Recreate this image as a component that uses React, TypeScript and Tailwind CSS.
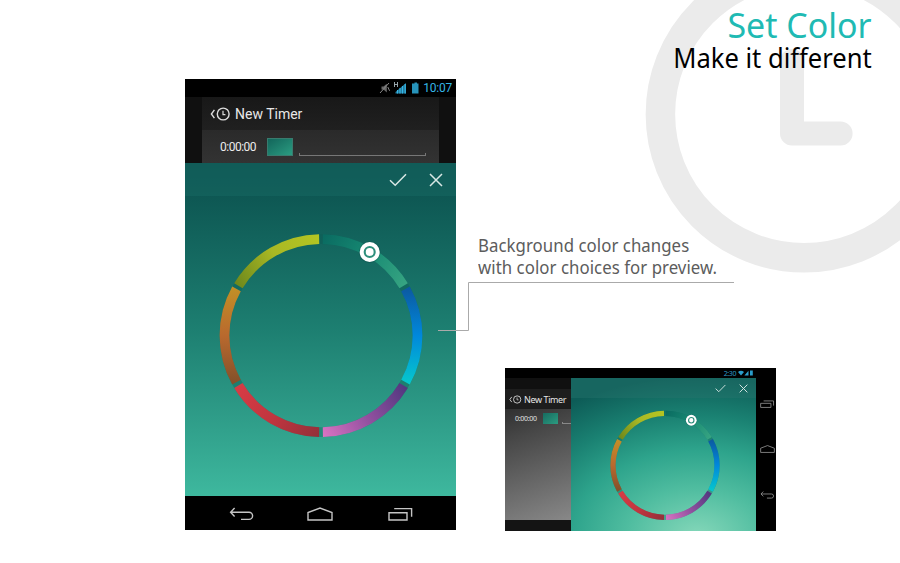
import React from "react";

type Stops = [string, string, string];

const SEGMENTS: Stops[] = [
  ["#0a6b61", "#178a73", "#37a482"],
  ["#0c59a0", "#0088dc", "#06c8cc"],
  ["#51377f", "#91509f", "#d873c2"],
  ["#93303a", "#c0353f", "#d63c45"],
  ["#82502a", "#b9692e", "#c29026"],
  ["#6d881c", "#a9b824", "#b4c522"],
];

const point = (deg: number, r = 96.5): [number, number] => {
  const a = (deg * Math.PI) / 180;
  return [102 + r * Math.sin(a), 102 - r * Math.cos(a)];
};

function ColorWheel({ id, size }: { id: string; size: number }) {
  return (
    <svg width={size} height={size} viewBox="0 -0.6 204 204" className="block shrink-0">
      <defs>
        {SEGMENTS.map((stops, i) => {
          const [x1, y1] = point(i * 60);
          const [x2, y2] = point(i * 60 + 60);
          return (
            <linearGradient key={i} id={`${id}${i}`} gradientUnits="userSpaceOnUse" x1={x1} y1={y1} x2={x2} y2={y2}>
              <stop offset="0" stopColor={stops[0]} />
              <stop offset="0.5" stopColor={stops[1]} />
              <stop offset="1" stopColor={stops[2]} />
            </linearGradient>
          );
        })}
      </defs>
      <circle cx="102" cy="102" r="96.5" fill="none" stroke="#0a5c54" strokeOpacity="0.35" strokeWidth="9.6" />
      {SEGMENTS.map((_, i) => {
        const [x1, y1] = point(i * 60 + 1.1);
        const [x2, y2] = point(i * 60 + 58.9);
        return (
          <path
            key={i}
            d={`M${x1} ${y1}A96.5 96.5 0 0 1 ${x2} ${y2}`}
            fill="none"
            stroke={`url(#${id}${i})`}
            strokeWidth="9.8"
          />
        );
      })}
      <circle cx="150.7" cy="18.6" r="10.8" fill="#0a4a45" fillOpacity="0.3" />
      <circle cx="150.7" cy="18.4" r="10" fill="#fff" />
      <circle cx="150.7" cy="18.4" r="5" fill="none" stroke="#2d8f7c" strokeWidth="2.1" />
    </svg>
  );
}

function BackClock({ className }: { className: string }) {
  return (
    <svg viewBox="0 0 21 14" className={className} fill="none" stroke="#dcdcdc">
      <path d="M4.4 2.8L1.4 7l3 4.2" strokeWidth="1.4" />
      <circle cx="13.2" cy="7" r="5.9" strokeWidth="1.4" />
      <path d="M13 3.8V7.6H15.4" strokeWidth="1.2" />
    </svg>
  );
}

function Check({ className }: { className: string }) {
  return (
    <svg viewBox="0 0 18 14" className={className} fill="none" stroke="#d9e8e5" strokeWidth="1.5">
      <path d="M1 7.2L6.2 12.2 17 1.2" />
    </svg>
  );
}

function Cross({ className }: { className: string }) {
  return (
    <svg viewBox="0 0 14 14" className={className} fill="none" stroke="#d9e8e5" strokeWidth="1.5">
      <path d="M1 1L13 13M13 1L1 13" />
    </svg>
  );
}

const BACK = "M5.6 1L1.6 5.2 5.6 9.4M1.6 5.2H20A3.5 3.5 0 0 1 20 12.4H12";
const HOME = "M1 13V5.6L13 1 25 5.6V13Z";
const RECENT = "M1 5.8H19V13H1ZM6.2 1.6H23.6V9.8";

function NavIcon({ d, className, color }: { d: string; className: string; color: string }) {
  return (
    <svg viewBox="0 0 26 14" className={className} fill="none" stroke={color} strokeWidth="1.4">
      <path d={d} />
    </svg>
  );
}

function Phone() {
  return (
    <div className="flex h-[451px] w-[271px] flex-col bg-black">
      <div className="flex h-[18px] items-center justify-end pr-[4px]">
        <svg width="40" height="14" viewBox="0 0 40 14" className="mr-[4px]" fill="none">
          <path d="M2.5 5.5H4.5L7.8 2.7V11.4L4.5 8.5H2.5Z" fill="#686868" />
          <path d="M1 12L10 2M8.8 6L10.6 9.8" stroke="#888" strokeWidth="1" />
          <path d="M15.5 1V6M18.5 1V6M15.5 3.5H18.5" stroke="#a5b4bb" strokeWidth="0.9" />
          <path d="M16.5 12.5V11L27 2V12.5Z" fill="#247b9c" />
          <path d="M18.5 9V12.5M21 7V12.5M23.5 5V12.5M26.2 3V12.5" stroke="#35b5e5" strokeWidth="1.1" />
          <path d="M34 2.5H35.5V1.4H38V2.5H39.5V12.6H33V2.5Z" fill="#2793ba" />
        </svg>
        <span className="text-[12px] leading-none tracking-[-0.25px] text-[#35b5e5]">10:07</span>
      </div>
      <div className="h-[66px] bg-[#101010] px-[17px]">
        <div className="flex h-[33px] items-center bg-gradient-to-b from-[#181818] to-[#202020] pl-[8px]">
          <BackClock className="h-[14px] w-[21px]" />
          <span className="ml-[4px] text-[14px] leading-none text-[#e8e8e8]">New Timer</span>
        </div>
        <div className="flex h-[33px] items-center bg-gradient-to-b from-[#2a2a2a] to-[#333] pl-[18px]">
          <span className="mt-px w-[47px] text-[12px] leading-none tracking-[-0.5px] text-[#ececec]">0:00:00</span>
          <span className="mt-px h-[18px] w-[26px] border border-[#397b6e] bg-gradient-to-br from-[#12665b] to-[#2b9c81]" />
          <span className="ml-[6px] mt-[15px] h-[3px] w-[127px] border-x border-b border-[#777]" />
        </div>
      </div>
      <div className="flex h-[333px] flex-col bg-gradient-to-b from-[#0a4e4c] via-[#1d7f71] to-[#3eb89e]">
        <div className="flex h-[33px] items-center justify-end bg-[#156660]/60 pr-[13px]">
          <Check className="h-[14px] w-[18px]" />
          <Cross className="ml-[22px] h-[14px] w-[14px]" />
        </div>
        <div className="ml-[34px] mt-[37px]">
          <ColorWheel id="p" size={204} />
        </div>
      </div>
      <div className="flex h-[34px] items-center pl-[44px] pt-[2px]">
        <NavIcon d={BACK} className="h-[14px] w-[26px]" color="#c5c5c5" />
        <NavIcon d={HOME} className="ml-[52px] h-[14px] w-[26px]" color="#c5c5c5" />
        <NavIcon d={RECENT} className="ml-[55px] h-[14px] w-[26px]" color="#c5c5c5" />
      </div>
    </div>
  );
}

function Tablet() {
  return (
    <div className="flex h-[163px] w-[271px] bg-black">
      <div className="flex w-[251px] flex-col">
        <div className="flex h-[10px] items-center justify-end gap-[2px] pr-[3px]">
          <span className="text-[7px] leading-none tracking-[-0.4px] text-[#2e9cc6]">2:30</span>
          <svg width="15" height="6" viewBox="0 0 15 6" fill="#2a9dca">
            <path d="M0 2Q3 -0.6 6 2L3 5.6ZM6.4 5.5L10.5 0.8V5.5ZM12 0.6H14.8V5.5H12Z" />
          </svg>
        </div>
        <div className="flex h-[153px]">
          <div className="w-[66px] bg-[#141414]">
            <div className="h-[11px] bg-[#101010]" />
            <div className="flex h-[20px] items-center bg-[#1d1d1d] pl-[4px]">
              <BackClock className="h-[9px] w-[13px]" />
              <span className="ml-[2px] whitespace-nowrap text-[9px] leading-none tracking-[-0.4px] text-[#e6e6e6]">New Timer</span>
            </div>
            <div className="h-[111px] bg-[linear-gradient(160deg,#303030_0%,#484848_25%,#646464_58%,#888_100%)]">
              <div className="flex h-[19px] items-center pl-[10px]">
                <span className="w-[28px] text-[7px] leading-none tracking-[-0.3px] text-[#e2e2e2]">0:00:00</span>
                <span className="h-[11px] w-[15px] bg-gradient-to-br from-[#176c60] to-[#2c9b80]" />
                <span className="ml-[4px] mt-[9px] h-[2px] w-[9px] border-b border-l border-[#888]" />
              </div>
            </div>
          </div>
          <div className="flex w-[185px] flex-col bg-[radial-gradient(ellipse_125%_105%_at_68%_104%,#86d8ba_0%,#50bda0_30%,#2ea48c_54%,#1a8172_76%,#0d5c57_100%)]">
            <div className="flex h-[20px] items-center justify-end bg-[#28766e]/40 pr-[8px]">
              <Check className="h-[9px] w-[11px]" />
              <Cross className="ml-[13px] h-[9px] w-[9px]" />
            </div>
            <div className="ml-[39px] mt-[12px]">
              <ColorWheel id="t" size={110} />
            </div>
          </div>
        </div>
      </div>
      <div className="flex w-[20px] flex-col items-center pl-[2px] pt-[32px]">
        <NavIcon d={RECENT} className="h-[8px] w-[15px]" color="#999" />
        <NavIcon d={HOME} className="mt-[37px] h-[8px] w-[15px]" color="#999" />
        <NavIcon d={BACK} className="mt-[38px] h-[8px] w-[15px]" color="#999" />
      </div>
    </div>
  );
}

export default function App() {
  return (
    <main className="relative flex h-[563px] w-[900px] overflow-hidden bg-white font-['Roboto',sans-serif]">
      <svg className="absolute right-0 top-0" width="280" height="280" viewBox="620 0 280 280" fill="none" stroke="#ebebeb">
        <circle cx="804" cy="114.2" r="143.6" strokeWidth="29.5" />
        <path d="M792 61V133.6H840.6" strokeWidth="24" strokeLinecap="round" strokeLinejoin="round" />
      </svg>
      <div className="w-[456px] pl-[185px] pt-[79px]">
        <Phone />
      </div>
      <div className="relative flex flex-1 flex-col font-['Noto_Sans',sans-serif]">
        <header className="flex h-[234px] flex-col items-end pr-[28px] pt-[5px]">
          <h1 className="origin-right scale-x-[0.97] text-[35px] leading-[40px] text-[#20bab3]">Set Color</h1>
          <p className="origin-right scale-x-[0.965] text-[26.5px] leading-[27px] text-black">Make it different</p>
        </header>
        <p className="h-[134px] origin-[22px_0] scale-x-[0.96] whitespace-nowrap pl-[22px] text-[17.5px] leading-[22px] tracking-[0.05px] text-[#5c5c5c]">
          Background color changes
          <br />
          with color choices for preview.
        </p>
        <div className="pl-[49px]">
          <Tablet />
        </div>
      </div>
      <svg className="absolute left-[438px] top-[282px]" width="297" height="50" fill="none" stroke="#aaa">
        <path d="M0 48.5H30.5V0.5H296" />
      </svg>
    </main>
  );
}
